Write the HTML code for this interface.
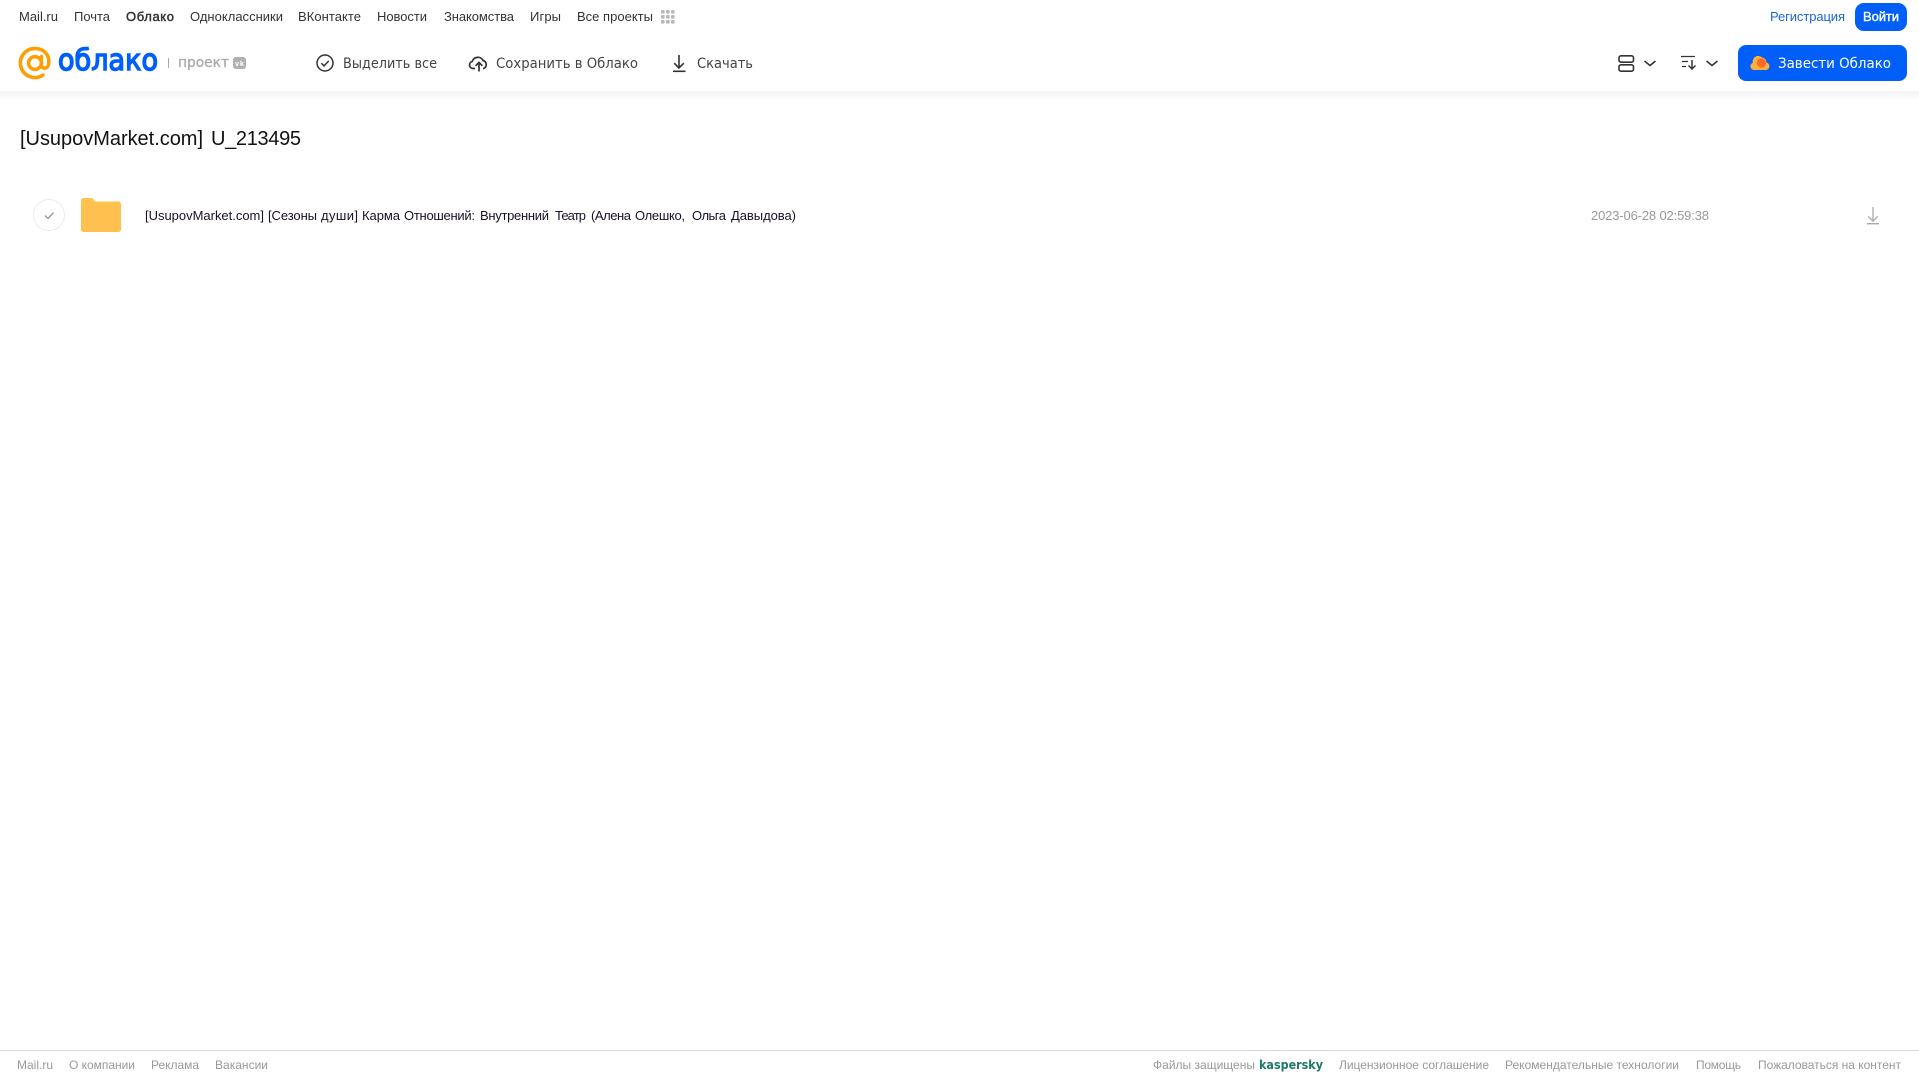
<!DOCTYPE html>
<html lang="ru"><head><meta charset="utf-8"><title>Облако</title>
<style>
html,body{margin:0;padding:0;background:#fff;width:1919px;height:1079px;overflow:hidden}
svg{position:absolute;left:0;top:0;display:block}
text{font-family:"Liberation Sans","DejaVu Sans",sans-serif}
.n{font-size:13px;fill:#333}
.a{font-size:14px;fill:#444;font-family:"DejaVu Sans","Liberation Sans",sans-serif}
.f{font-size:12px;fill:#999}
.r{font-size:13px;fill:#1a1024}
</style></head><body>
<svg width="1919" height="1079" viewBox="0 0 1919 1079" xmlns="http://www.w3.org/2000/svg">
<defs><linearGradient id="sh" x1="0" y1="0" x2="0" y2="1"><stop offset="0" stop-color="#f4f4f4"/><stop offset="1" stop-color="#fff"/></linearGradient></defs>
<rect x="0" y="91" width="1919" height="10" fill="url(#sh)"/>

<!-- top nav -->
<text class="n" x="19" y="21" textLength="39">Mail.ru</text>
<text class="n" x="74" y="21" textLength="36">Почта</text>
<text class="n" x="126" y="21" textLength="48" stroke="#333" stroke-width=".45">Облако</text>
<text class="n" x="190" y="21" textLength="93">Одноклассники</text>
<text class="n" x="298" y="21" textLength="63">ВКонтакте</text>
<text class="n" x="377" y="21" textLength="50">Новости</text>
<text class="n" x="444" y="21" textLength="70">Знакомства</text>
<text class="n" x="530" y="21" textLength="31">Игры</text>
<text class="n" x="577" y="21" textLength="76">Все проекты</text>
<g fill="#b8b8b8"><rect x="661" y="10" width="3.6" height="3.6" rx="1"/><rect x="666" y="10" width="3.6" height="3.6" rx="1"/><rect x="671" y="10" width="3.6" height="3.6" rx="1"/><rect x="661" y="15" width="3.6" height="3.6" rx="1"/><rect x="666" y="15" width="3.6" height="3.6" rx="1"/><rect x="671" y="15" width="3.6" height="3.6" rx="1"/><rect x="661" y="20" width="3.6" height="3.6" rx="1"/><rect x="666" y="20" width="3.6" height="3.6" rx="1"/><rect x="671" y="20" width="3.6" height="3.6" rx="1"/></g>

<text x="1770" y="21" font-size="13" fill="#1a66d6" textLength="75">Регистрация</text>
<rect x="1855" y="3" width="52" height="28" rx="9" fill="#005ff9"/>
<text x="1863" y="21" font-size="13" fill="#fff" stroke="#fff" stroke-width=".4" textLength="36">Войти</text>

<!-- logo -->
<g fill="none" stroke="#ff9e00" stroke-width="3.5" stroke-linecap="round">
<circle cx="35" cy="63" r="6.4"/>
<path d="M41.4 56.5V65.2C41.4 69 47.6 69.6 48.6 64.4C50.4 55 43.6 48.5 35 48.5A14.5 14.5 0 1 0 43 75"/>
</g>
<text x="58" y="70" font-size="29" fill="#005ff9" stroke="#005ff9" stroke-width="1.4" textLength="100" lengthAdjust="spacingAndGlyphs" style="font-family:'DejaVu Sans',sans-serif">облако</text>
<rect x="168" y="58" width="1" height="10" fill="#aaa"/>
<text x="178" y="67" font-size="14" fill="#aaa" stroke="#aaa" stroke-width=".3" textLength="51" lengthAdjust="spacingAndGlyphs" style="font-family:'DejaVu Sans',sans-serif">проект</text>
<rect x="233" y="57" width="13" height="12" rx="3" fill="#b0b0b0"/>
<text x="235" y="66" font-size="7.5" font-weight="700" fill="#fff" textLength="9">vk</text>

<!-- actions -->
<circle cx="325" cy="63" r="8" fill="none" stroke="#333" stroke-width="1.5"/>
<path d="M321.3 63.2l2.7 2.7 4.8-5" fill="none" stroke="#333" stroke-width="1.5"/>
<text class="a" x="343" y="68" textLength="94" lengthAdjust="spacingAndGlyphs">Выделить все</text>

<path d="M475 68.5H473.2A3.6 3.6 0 0 1 472.3 61.4A5.8 5.8 0 0 1 483 60.5A4.2 4.2 0 0 1 483.5 68.5H483" fill="none" stroke="#333" stroke-width="1.7"/>
<path d="M479 71.5V62.5M475.6 65.8L479 62.4L482.4 65.8" fill="none" stroke="#333" stroke-width="1.7"/>
<text class="a" x="496" y="68" textLength="142" lengthAdjust="spacingAndGlyphs">Сохранить в Облако</text>

<path d="M679 55V68M674.2 63.2L679 68L683.8 63.2" fill="none" stroke="#333" stroke-width="1.6"/>
<rect x="673" y="70.5" width="12.5" height="1.6" fill="#333"/>
<text class="a" x="697" y="68" textLength="56" lengthAdjust="spacingAndGlyphs">Скачать</text>

<!-- view / sort -->
<g fill="none" stroke="#333" stroke-width="1.6">
<rect x="1619" y="55.8" width="14.5" height="6.4" rx="2"/>
<rect x="1619" y="64.8" width="14.5" height="6.4" rx="2"/>
<path d="M1644.5 61L1650 65.5L1655.5 61"/>
<path d="M1706.5 61L1712 65.5L1717.5 61"/>
<path d="M1681 56.5H1695M1682 61.5H1688M1682 66.5H1686" stroke-width="1.2"/>
<path d="M1692 60V68.5M1688.5 65.5L1692 69L1695.5 65.5" stroke-width="1.5"/>
</g>

<rect x="1738" y="45" width="169" height="36" rx="8" fill="#005ff9"/>
<path d="M1754.5 70A3.8 3.8 0 0 1 1752.8 62.7A5.5 5.5 0 0 1 1762 57.5A5 5 0 0 1 1766.5 62.5A3.8 3.8 0 0 1 1765.5 70Z" fill="#ffb03a"/>
<circle cx="1761.5" cy="63" r="4.6" fill="#ff6a2b"/>
<text x="1778" y="68" font-size="14" fill="#fff" textLength="113" lengthAdjust="spacingAndGlyphs" style="font-family:'DejaVu Sans',sans-serif">Завести Облако</text>

<!-- title -->
<text x="20" y="145" font-size="20" fill="#111" textLength="183">[UsupovMarket.com]</text>
<text x="211" y="145" font-size="20" fill="#111" textLength="90">U_213495</text>

<!-- row -->
<circle cx="49" cy="215" r="15.5" fill="#fff" stroke="#ececec"/>
<path d="M45 215.5L48 218.5L53.5 212.5" fill="none" stroke="#999" stroke-width="1.3"/>
<path d="M81 200.5A2.5 2.5 0 0 1 83.5 198H91.5C93.5 198 94 201.5 96 201.5H118.5A2.5 2.5 0 0 1 121 204V208H81Z" fill="#ffc24d"/>
<path d="M81 206.5H121V229.5A2.5 2.5 0 0 1 118.5 232H83.5A2.5 2.5 0 0 1 81 229.5Z" fill="#ffc04f"/>
<text class="r" x="145" y="220" textLength="119">[UsupovMarket.com]</text>
<text class="r" x="268" y="220" textLength="49">[Сезоны</text>
<text class="r" x="321" y="220" textLength="37">души]</text>
<text class="r" x="362" y="220" textLength="38">Карма</text>
<text class="r" x="404" y="220" textLength="71">Отношений:</text>
<text class="r" x="480" y="220" textLength="69">Внутренний</text>
<text class="r" x="555" y="220" textLength="31">Театр</text>
<text class="r" x="591" y="220" textLength="40">(Алена</text>
<text class="r" x="635" y="220" textLength="50">Олешко,</text>
<text class="r" x="692" y="220" textLength="34">Ольга</text>
<text class="r" x="731" y="220" textLength="65">Давыдова)</text>
<text x="1591" y="220" font-size="13" fill="#999" textLength="118">2023-06-28 02:59:38</text>
<path d="M1873 207V221M1868.3 216.4L1873 221.2L1877.7 216.4" fill="none" stroke="#aaa" stroke-width="1.3"/>
<rect x="1867" y="223" width="12" height="1.4" fill="#aaa"/>

<!-- footer -->
<rect x="0" y="1050" width="1919" height="1" fill="#d6d6d6"/>
<text class="f" x="17" y="1069" textLength="36">Mail.ru</text>
<text class="f" x="69" y="1069" textLength="66">О компании</text>
<text class="f" x="151" y="1069" textLength="48">Реклама</text>
<text class="f" x="215" y="1069" textLength="53">Вакансии</text>
<text class="f" x="1153" y="1069" textLength="102">Файлы защищены</text>
<text x="1259" y="1069" font-size="12" font-weight="700" fill="#1d7a66" textLength="64" lengthAdjust="spacingAndGlyphs" style="font-family:'DejaVu Sans',sans-serif">kaspersky</text>
<text class="f" x="1339" y="1069" textLength="150">Лицензионное соглашение</text>
<text class="f" x="1505" y="1069" textLength="174">Рекомендательные технологии</text>
<text class="f" x="1696" y="1069" textLength="45">Помощь</text>
<text class="f" x="1758" y="1069" textLength="143">Пожаловаться на контент</text>
</svg>
</body></html>
